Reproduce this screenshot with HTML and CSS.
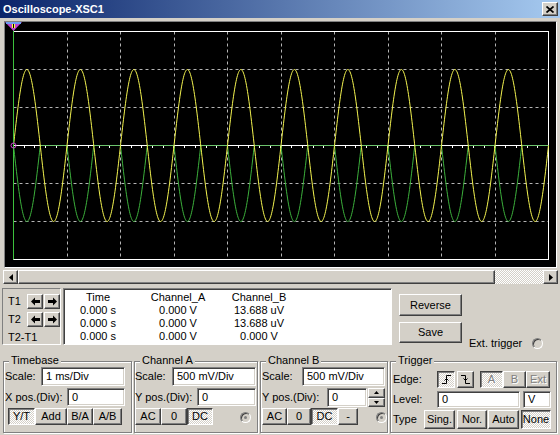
FILE: index.html
```html
<!DOCTYPE html>
<html lang="en">

<head>
    <meta charset="UTF-8">
    <title>Oscilloscope-XSC1</title>
    <link rel="stylesheet" href="styles.css">
</head>

<body>
    <div class="window">
        <div class="titlebar">
            <span class="title">Oscilloscope-XSC1</span>
            <span class="close raised">
                <svg width="8" height="7" viewBox="0 0 8 7"><path d="M0.5,0.5 L7.5,6.5 M7.5,0.5 L0.5,6.5" stroke="#000" stroke-width="1.7"/></svg>
            </span>
        </div>

        <div class="screen">
            <svg class="scope" width="551" height="245" viewBox="5 22 551 245">
                <g stroke="#b4b4b4" stroke-dasharray="3 3">
                    <path d="M67.5,31.5V259.5 M120.5,31.5V259.5 M174.5,31.5V259.5 M227.5,31.5V259.5 M281.5,31.5V259.5 M334.5,31.5V259.5 M388.5,31.5V259.5 M441.5,31.5V259.5 M495.5,31.5V259.5"/>
                    <path d="M13.5,69.5H548.5 M13.5,107.5H548.5 M13.5,183.5H548.5 M13.5,221.5H548.5"/>
                </g>
                <rect x="13.5" y="31.5" width="535" height="228" fill="none" stroke="#fff"/>
                <path d="M13.5,145.5H548.5" stroke="#fff"/>
                <path id="ticks" stroke="#fff" d=""/>
                <path id="trace-b" fill="none" stroke="#3cb03c" d=""/>
                <path id="trace-a" fill="none" stroke="#f4f450" d=""/>
                <path d="M13.5,30V259.5" stroke="#3cc03c"/>
                <circle cx="13.5" cy="145.5" r="2.5" fill="none" stroke="#d040d0"/>
                <polygon points="5,22 22,22 13.5,31" fill="#c040d0"/>
                <rect x="6" y="22" width="15" height="2" fill="#6e9cf2"/>
                <rect x="12" y="24" width="3" height="4" fill="#ffff40"/>
                <path d="M13.5,24V28" stroke="#000"/>
            </svg>
        </div>

        <div class="hscroll">
            <span class="sb-btn raised">
                <svg width="4" height="7" viewBox="0 0 4 7"><polygon points="4,0 0,3.5 4,7" fill="#000"/></svg>
            </span>
            <span class="sb-thumb raised"></span>
            <span class="sb-track"></span>
            <span class="sb-btn raised">
                <svg width="4" height="7" viewBox="0 0 4 7"><polygon points="0,0 4,3.5 0,7" fill="#000"/></svg>
            </span>
        </div>

        <div class="panel">
            <div class="cursors">
                <span class="t-label">T1</span>
                <button class="btn arrow">
                    <svg width="9" height="9" viewBox="0 0 9 9"><polygon points="0,4.5 4,0.5 4,3 9,3 9,6 4,6 4,8.5" fill="#000"/></svg>
                </button>
                <button class="btn arrow">
                    <svg width="9" height="9" viewBox="0 0 9 9"><polygon points="9,4.5 5,0.5 5,3 0,3 0,6 5,6 5,8.5" fill="#000"/></svg>
                </button>
                <span class="t-label">T2</span>
                <button class="btn arrow">
                    <svg width="9" height="9" viewBox="0 0 9 9"><polygon points="0,4.5 4,0.5 4,3 9,3 9,6 4,6 4,8.5" fill="#000"/></svg>
                </button>
                <button class="btn arrow">
                    <svg width="9" height="9" viewBox="0 0 9 9"><polygon points="9,4.5 5,0.5 5,3 0,3 0,6 5,6 5,8.5" fill="#000"/></svg>
                </button>
                <span class="t-label t-diff">T2-T1</span>
            </div>

            <div class="readout">
                <span>Time</span><span>Channel_A</span><span>Channel_B</span>
                <span>0.000 s</span><span>0.000 V</span><span>13.688 uV</span>
                <span>0.000 s</span><span>0.000 V</span><span>13.688 uV</span>
                <span>0.000 s</span><span>0.000 V</span><span>0.000 V</span>
            </div>

            <div class="side">
                <div class="side-btns">
                    <button class="btn big">Reverse</button>
                    <button class="btn big save">Save</button>
                </div>
                <div class="ext">Ext. trigger <span class="radio"></span></div>
            </div>
        </div>

        <div class="controls">
            <div class="group timebase">
                <span class="legend">Timebase</span>
                <div class="row r1">Scale: <span class="field w84">1 ms/Div</span></div>
                <div class="row r2">X pos.(Div): <span class="field w58">0</span></div>
                <div class="row r3 tb-btns">
                    <button class="btn on" style="width: 27px">Y/T</button>
                    <button class="btn" style="width: 32px">Add</button>
                    <button class="btn" style="width: 26px">B/A</button>
                    <button class="btn" style="width: 29px">A/B</button>
                </div>
            </div>

            <div class="group chan-a">
                <span class="legend">Channel A</span>
                <div class="row r1">Scale: <span class="field w84">500 mV/Div</span></div>
                <div class="row r2">Y pos.(Div): <span class="field w59">0</span></div>
                <div class="row r3">
                    <button class="btn" style="width: 26px">AC</button>
                    <button class="btn" style="width: 26px">0</button>
                    <button class="btn on" style="width: 26px">DC</button>
                    <span class="radio dot"></span>
                </div>
            </div>

            <div class="group chan-b">
                <span class="legend">Channel B</span>
                <div class="row r1">Scale: <span class="field w83">500 mV/Div</span></div>
                <div class="row r2">Y pos.(Div): <span class="field w40">0</span>
                    <span class="spin">
                        <span class="spin-btn raised"><svg width="5" height="3" viewBox="0 0 5 3"><polygon points="0,3 2.5,0 5,3" fill="#000"/></svg></span>
                        <span class="spin-btn raised"><svg width="5" height="3" viewBox="0 0 5 3"><polygon points="0,0 2.5,3 5,0" fill="#000"/></svg></span>
                    </span>
                </div>
                <div class="row r3">
                    <button class="btn" style="width: 25px">AC</button>
                    <button class="btn" style="width: 24px">0</button>
                    <button class="btn on" style="width: 27px">DC</button>
                    <button class="btn" style="width: 20px">-</button>
                    <span class="radio dot"></span>
                </div>
            </div>

            <div class="group trigger">
                <span class="legend">Trigger</span>
                <div class="row tr1">
                    <span class="tr-label">Edge:</span>
                    <button class="btn on" style="width: 18px">
                        <svg width="9" height="9" viewBox="0 0 9 9"><path d="M0,8.5H4.5V0.5H9 M2.5,5.5L4.5,3.5L6.5,5.5" fill="none" stroke="#000"/></svg>
                    </button>
                    <button class="btn" style="width: 17px; margin-left: 2px">
                        <svg width="9" height="9" viewBox="0 0 9 9"><path d="M0,0.5H4.5V8.5H9 M2.5,3.5L4.5,5.5L6.5,3.5" fill="none" stroke="#000"/></svg>
                    </button>
                    <button class="btn on off" style="width: 23px; margin-left: 6px">A</button>
                    <button class="btn off" style="width: 23px">B</button>
                    <button class="btn off" style="width: 24px">Ext</button>
                </div>
                <div class="row tr2">
                    <span class="tr-label">Level:</span>
                    <span class="field w83">0</span>
                    <span class="field w28 unit">V</span>
                </div>
                <div class="row tr3">
                    <span class="type-label">Type</span>
                    <button class="btn" style="width: 31px">Sing.</button>
                    <button class="btn" style="width: 30px; margin-left: 2px">Nor.</button>
                    <button class="btn" style="width: 31px; margin-left: 1px">Auto</button>
                    <button class="btn on" style="width: 30px; margin-left: 2px">None</button>
                </div>
            </div>
        </div>
    </div>

    <script>
        const left = 13.5, right = 548.5, mid = 145.5, amp = 76, period = 53.5;
        let chA = '', chB = '';

        for (let x = left; x <= right + 0.01; x += 0.5) {
            const s = Math.sin(2 * Math.PI * (x - left) / period);
            chA += (chA ? 'L' : 'M') + x + ',' + (mid - amp * s).toFixed(2);
            chB += (chB ? 'L' : 'M') + x + ',' + (mid + amp * Math.max(s, 0)).toFixed(2);
        }
        document.getElementById('trace-a').setAttribute('d', chA);
        document.getElementById('trace-b').setAttribute('d', chB);

        let ticks = '';
        for (let x = left + period / 5; x < right; x += period / 5) {
            ticks += 'M' + (Math.floor(x) + 0.5) + ',146V148';
        }
        document.getElementById('ticks').setAttribute('d', ticks);
    </script>
</body>

</html>
```

FILE: styles.css
```css
* {
    margin: 0;
    padding: 0;
    box-sizing: border-box;
}

body {
    background: #d4d0c8;
    color: #000;
    font-family: 'Liberation Sans', Arial, sans-serif;
    font-size: 11px;
    line-height: 13px;
}

.window {
    width: 560px;
    height: 435px;
    overflow: hidden;
    background: #d4d0c8;
}

/* 3d bits */
.raised {
    background: #d4d0c8;
    border: 1px solid;
    border-color: #fff #404040 #404040 #fff;
    box-shadow: inset -1px -1px #808080;
}

.btn {
    display: flex;
    align-items: center;
    justify-content: center;
    height: 100%;
    font: inherit;
    color: #000;
    background: #d4d0c8;
    border: 1px solid;
    border-color: #fff #404040 #404040 #fff;
    box-shadow: inset -1px -1px #808080;
}

.btn.on {
    border-color: #404040 #fff #fff #404040;
    box-shadow: inset 1px 1px #808080;
    background: repeating-conic-gradient(#fff 0 25%, #d4d0c8 0 50%) 0 0 / 2px 2px;
}

.btn.off {
    color: #808080;
    text-shadow: 1px 1px #fff;
}

.field {
    display: flex;
    align-items: center;
    height: 100%;
    padding-left: 4px;
    background: #fff;
    border: 1px solid;
    border-color: #808080 #fff #fff #808080;
    box-shadow: inset 1px 1px #404040, inset -1px -1px #d4d0c8;
}

.radio {
    display: flex;
    align-items: center;
    justify-content: center;
    width: 11px;
    height: 11px;
    border-radius: 50%;
    border: 1px solid;
    border-color: #808080 #fff #fff #808080;
    box-shadow: inset 1px 1px #404040;
    background: #d4d0c8;
}

.radio.dot::after {
    content: '';
    width: 3px;
    height: 3px;
    border-radius: 50%;
    background: #808080;
}

/* title */
.titlebar {
    height: 18px;
    display: flex;
    align-items: center;
    justify-content: space-between;
    padding: 0 2px 0 3px;
    background: linear-gradient(to right, #0a246a, #a6caf0);
}

.title {
    color: #fff;
    font-weight: bold;
}

.close {
    width: 16px;
    height: 14px;
    display: flex;
    align-items: center;
    justify-content: center;
}

/* scope display */
.screen {
    width: 553px;
    margin: 3px 0 0 4px;
    border: 1px solid;
    border-color: #808080 #fff #fff #808080;
    background: #000;
}

.scope {
    display: block;
}

.hscroll {
    display: flex;
    width: 555px;
    height: 14px;
    margin: 2px 0 0 3px;
}

.sb-btn {
    width: 15px;
    display: flex;
    align-items: center;
    justify-content: center;
}

.sb-thumb {
    width: 477px;
}

.sb-track {
    width: 48px;
    background: repeating-conic-gradient(#fff 0 25%, #d4d0c8 0 50%) 0 0 / 2px 2px;
}

/* cursor readout */
.panel {
    display: flex;
    height: 57px;
    margin: 4px 0 0 2px;
}

.cursors {
    width: 59px;
    display: grid;
    grid-template-columns: 18px 16px 16px;
    grid-template-rows: 15px 15px 13px;
    column-gap: 1px;
    row-gap: 3px;
    padding: 5px 0 0 5px;
    border: 1px solid;
    border-color: #808080 #fff #fff #808080;
}

.t-label {
    align-self: center;
}

.t-diff {
    grid-column: 1 / 4;
    margin-top: 2px;
}

.readout {
    width: 329px;
    margin-left: 2px;
    display: grid;
    grid-template-columns: 68px 92px 70px;
    align-content: start;
    padding-top: 2px;
    text-align: center;
    background: #fff;
    border: 1px solid;
    border-color: #808080 #fff #fff #808080;
    box-shadow: inset 1px 1px #404040;
}

.side {
    display: flex;
    margin-left: 7px;
}

.side-btns {
    width: 63px;
    display: flex;
    flex-direction: column;
}

.btn.big {
    height: 22px;
    margin-top: 6px;
}

.btn.big.save {
    height: 21px;
}

.ext {
    display: flex;
    align-items: center;
    gap: 10px;
    align-self: flex-end;
    margin: 0 0 -5px 7px;
}

/* control groups */
.controls {
    display: flex;
    gap: 2px;
    height: 72px;
    margin: 16px 0 0 3px;
}

.group {
    position: relative;
    height: 100%;
    border: 1px solid #808080;
    box-shadow: inset 1px 1px #fff, 1px 1px #fff;
    display: flex;
    flex-direction: column;
    padding-top: 5px;
}

.legend {
    position: absolute;
    top: -8px;
    left: 5px;
    padding: 0 2px;
    background: #d4d0c8;
}

.row {
    display: flex;
    align-items: center;
}

.r1 {
    height: 19px;
}

.r2 {
    height: 18px;
    margin-top: 2px;
}

.r3 {
    height: 17px;
    margin-top: 2px;
}

.r1 .field,
.r2 .field {
    margin-left: auto;
}

.w84 { width: 84px; }
.w83 { width: 83px; }
.w59 { width: 59px; }
.w58 { width: 58px; }
.w40 { width: 40px; }
.w28 { width: 28px; }

.timebase {
    width: 129px;
    padding-left: 1px;
    padding-right: 6px;
}

.tb-btns {
    padding-left: 3px;
}

.chan-a {
    width: 124px;
    padding-right: 1px;
}

.chan-b {
    width: 128px;
    padding-left: 1px;
    padding-right: 2px;
}

.chan-a .radio {
    margin: 1px 5px 0 auto;
}

.chan-b .radio {
    margin: 1px -2px 0 auto;
}

.chan-b .r2 {
    height: 19px;
}

.chan-b .r2 .field {
    margin-left: auto;
}

.chan-b .r3 {
    margin-top: 1px;
}

.spin {
    width: 17px;
    height: 100%;
    margin-left: 1px;
    display: flex;
    flex-direction: column;
}

.spin-btn {
    flex: 1;
    display: flex;
    align-items: center;
    justify-content: center;
}

.trigger {
    width: 167px;
    padding: 9px 5px 0 2px;
}

.tr-label {
    width: 44px;
}

.type-label {
    width: 31px;
}

.tr1 {
    height: 17px;
}

.tr2 {
    height: 17px;
    margin-top: 3px;
}

.tr2 .unit {
    margin-left: 3px;
}

.tr3 {
    height: 19px;
    margin-top: 2px;
}
```
